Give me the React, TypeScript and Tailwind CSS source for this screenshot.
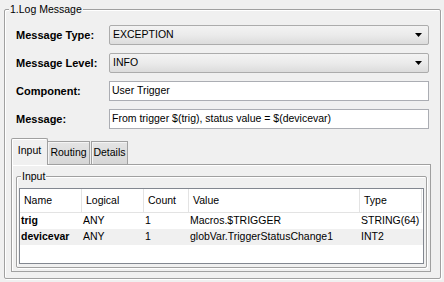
import type { ReactNode } from 'react';

const font = { fontFamily: '"Liberation Sans", Arial, sans-serif' };

function GroupBox({ title, className, children }: { title: string; className?: string; children: ReactNode }) {
    return (
        <div className={`relative rounded-[2px] border border-[#a0a0a0] shadow-[inset_1px_1px_0_#ffffff,1px_1px_0_#ffffff] ${className ?? ''}`}>
            <span className="absolute -top-[7px] left-[4px] bg-[#f0f0f0] px-[1px] text-[10.5px] leading-[13px] text-black">{title}</span>
            {children}
        </div>
    );
}

function Combo({ value }: { value: string }) {
    return (
        <div className="flex h-[20px] items-center justify-between rounded-[2px] border border-[#acacac] bg-gradient-to-b from-[#f3f3f3] via-[#ebebeb] to-[#dcdcdc] pr-[6px] pl-[3px] text-[10.5px]">
            <span>{value}</span>
            <svg width="7" height="4" viewBox="0 0 7 4">
                <path d="M0 0h7L3.5 4z" fill="#000" />
            </svg>
        </div>
    );
}

function TextBox({ value }: { value: string }) {
    return <div className="flex h-[20px] items-center border border-[#abadb3] bg-white pl-[2px] text-[10.5px]">{value}</div>;
}

const fields: { label: string; input: ReactNode }[] = [
    { label: 'Message Type:', input: <Combo value="EXCEPTION" /> },
    { label: 'Message Level:', input: <Combo value="INFO" /> },
    { label: 'Component:', input: <TextBox value="User Trigger" /> },
    { label: 'Message:', input: <TextBox value="From trigger $(trig), status value = $(devicevar)" /> },
];

const columns = ['Name', 'Logical', 'Count', 'Value', 'Type'];

const rows = [
    ['trig', 'ANY', '1', 'Macros.$TRIGGER', 'STRING(64)'],
    ['devicevar', 'ANY', '1', 'globVar.TriggerStatusChange1', 'INT2'],
];

const grid = 'grid grid-cols-[62px_62px_45px_171px_62px]';

export default function App() {
    return (
        <div className="h-[282px] w-[444px] overflow-hidden bg-[#f0f0f0] pt-[9px] pl-[4px] text-black" style={font}>
            <GroupBox title="1.Log Message" className="h-[270px] w-[437px]">
                <div className="mt-[15px] ml-[11px] grid w-[413px] grid-cols-[93px_1fr] items-center gap-y-[8px]">
                    {fields.map((f) => (
                        <div key={f.label} className="contents">
                            <span className="text-[11px] font-bold">{f.label}</span>
                            {f.input}
                        </div>
                    ))}
                </div>

                <div className="mt-[9px] ml-[6px] w-[420px]">
                    <div className="flex h-[26px] items-end">
                        <div className="relative z-10 -mb-[1px] flex h-[27px] w-[37px] items-center justify-center rounded-t-[2px] border border-b-0 border-[#a0a0a0] bg-[#f0f0f0] pb-[2px] text-[10.5px] shadow-[inset_1px_1px_0_#ffffff]">
                            Input
                        </div>
                        <div className="flex h-[23px] w-[42px] items-center justify-center border border-b-0 border-l-0 border-[#a0a0a0] bg-gradient-to-b from-[#e4e4e4] to-[#d6d6d6] text-[10.5px] shadow-[inset_1px_1px_0_#f4f4f4]">
                            Routing
                        </div>
                        <div className="ml-[1px] flex h-[23px] w-[37px] items-center justify-center border border-b-0 border-[#a0a0a0] bg-gradient-to-b from-[#e4e4e4] to-[#d6d6d6] text-[10.5px] shadow-[inset_1px_1px_0_#f4f4f4]">
                            Details
                        </div>
                    </div>
                    <div className="h-[108px] border border-[#a0a0a0] bg-[#f0f0f0] pt-[11px] pr-[3px] pl-[4px] shadow-[inset_1px_1px_0_#ffffff]">
                        <GroupBox title="Input" className="h-[92px] w-[411px]">
                            <div className="mt-[11px] ml-[2px] h-[76px] w-[405px] border border-[#828790] bg-white text-[10.5px]">
                                <div className={`${grid} h-[24px]`}>
                                    {columns.map((c) => (
                                        <div key={c} className="flex items-center border-r border-b border-[#e3e3e3] pl-[4px]">
                                            {c}
                                        </div>
                                    ))}
                                </div>
                                {rows.map((r, i) => (
                                    <div key={r[0]} className={`${grid} h-[16px] ${i % 2 ? 'bg-[#f0f0f0]' : 'bg-white'}`}>
                                        {r.map((v, j) => (
                                            <div key={j} className={`flex items-center pl-[1px] ${j === 0 ? 'font-bold' : ''}`}>
                                                {v}
                                            </div>
                                        ))}
                                    </div>
                                ))}
                            </div>
                        </GroupBox>
                    </div>
                </div>
            </GroupBox>
        </div>
    );
}
